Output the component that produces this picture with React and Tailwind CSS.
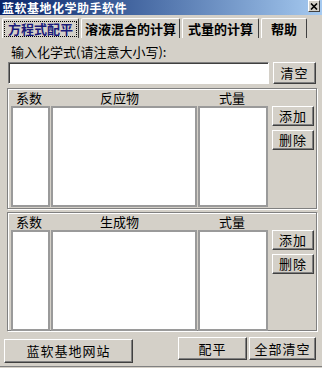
import React from "react";

const font = { fontFamily: '"Noto Sans CJK SC", "Liberation Sans", sans-serif' };

function Btn({ children, className = "" }) {
  return (
    <button
      className={
        "flex items-center justify-center bg-[#d4d0c8] text-[13px] text-black border border-t-white border-l-white border-r-[#404040] border-b-[#404040] shadow-[inset_-1px_-1px_#808080] tracking-[1px] " +
        className
      }>
      {children}
    </button>
  );
}

function ListGroup({ title, className = "" }) {
  return (
    <div
      className={
        "w-[310px] ml-[7px] border border-[#808080] shadow-[inset_1px_1px_white,1px_1px_white] flex flex-col pl-[3px] " +
        className
      }>
      {/* headers */}
      <div className="flex h-[16px] items-center text-[13px] leading-[14px] pt-[2px]">
        <div className="w-[39px] pl-[5px]">系数</div>
        <div className="w-[147px] text-center pr-[8px]">{title}</div>
        <div className="w-[70px] text-center">式量</div>
      </div>
      <div className="flex mt-[1px] gap-[1px]">
        <div className="w-[39px] h-[101px] bg-white border-2 border-[#9a9a9a]" />
        <div className="w-[146px] h-[101px] bg-white border-2 border-[#9a9a9a]" />
        <div className="w-[70px] h-[101px] bg-white border-2 border-[#9a9a9a]" />
        {/* side buttons */}
        <div className="flex flex-col gap-[4px] ml-[3px]">
          <Btn className="w-[42px] h-[20px]">添加</Btn>
          <Btn className="w-[42px] h-[20px]">删除</Btn>
        </div>
      </div>
    </div>
  );
}

export default function App() {
  return (
    <div className="w-[322px] h-[368px] bg-[#d4d0c8] flex flex-col overflow-hidden" style={font}>
      {/* Title bar */}
      <div className="h-[15px] flex items-start bg-gradient-to-r from-[#0a246a] to-[#a6caf0] relative">
        <div className="text-white font-bold text-[12px] leading-[15px] pl-[2px] tracking-[0.5px]">
          蓝软基地化学助手软件
        </div>
        <div className="absolute left-[308px] top-0 w-[12px] h-[12px] bg-[#d4d0c8] border border-t-white border-l-white border-r-[#404040] border-b-[#404040] flex items-center justify-center">
          <svg width="8" height="7" viewBox="0 0 8 7">
            <path d="M1 0.5 L7 6.5 M7 0.5 L1 6.5" stroke="black" strokeWidth="1.6" />
          </svg>
        </div>
      </div>
      {/* Tabs */}
      <div className="flex pl-[2px] gap-[2px] mt-[3px] h-[20px] text-[13px] font-bold">
        <div className="w-[77px] h-[20px] border border-b-0 border-t-white border-l-white border-r-[#404040] rounded-t-[2px] flex items-center justify-center">
          <span className="px-[3px] border border-dotted border-black text-[#1a1a7a] leading-[14px]">方程式配平</span>
        </div>
        <div className="w-[99px] h-[20px] border border-b-0 border-t-white border-l-white border-r-[#404040] rounded-t-[2px] flex items-center justify-center">
          溶液混合的计算
        </div>
        <div className="w-[77px] h-[20px] border border-b-0 border-t-white border-l-white border-r-[#404040] rounded-t-[2px] flex items-center justify-center">
          式量的计算
        </div>
        <div className="w-[46px] h-[20px] border border-b-0 border-t-white border-l-white border-r-[#404040] rounded-t-[2px] flex items-center justify-center">
          帮助
        </div>
      </div>
      {/* Label */}
      <div className="pl-[11px] pt-[6px] text-[13px] leading-[16px]">输入化学式(请注意大小写):</div>
      {/* Input row */}
      <div className="flex mt-[2px] pl-[8px] gap-[4px]">
        <div className="w-[261px] h-[22px] bg-white border border-t-[#808080] border-l-[#808080] border-r-white border-b-white shadow-[inset_1px_1px_#404040]" />
        <Btn className="w-[43px] h-[22px]">清空</Btn>
      </div>
      {/* Reactants */}
      <ListGroup title="反应物" className="mt-[4px] h-[121px]" />
      {/* Products */}
      <ListGroup title="生成物" className="mt-[3px] h-[119px]" />
      {/* Bottom buttons */}
      <div className="flex items-start mt-[6px] pl-[4px]">
        <Btn className="w-[129px] h-[24px] mt-[2px]">蓝软基地网站</Btn>
        <Btn className="w-[69px] h-[23px] ml-[45px]">配平</Btn>
        <Btn className="w-[67px] h-[23px] ml-[2px]">全部清空</Btn>
      </div>
      <div className="mt-[3px] border-t border-[#808080] h-[1px] bg-white" />
    </div>
  );
}
